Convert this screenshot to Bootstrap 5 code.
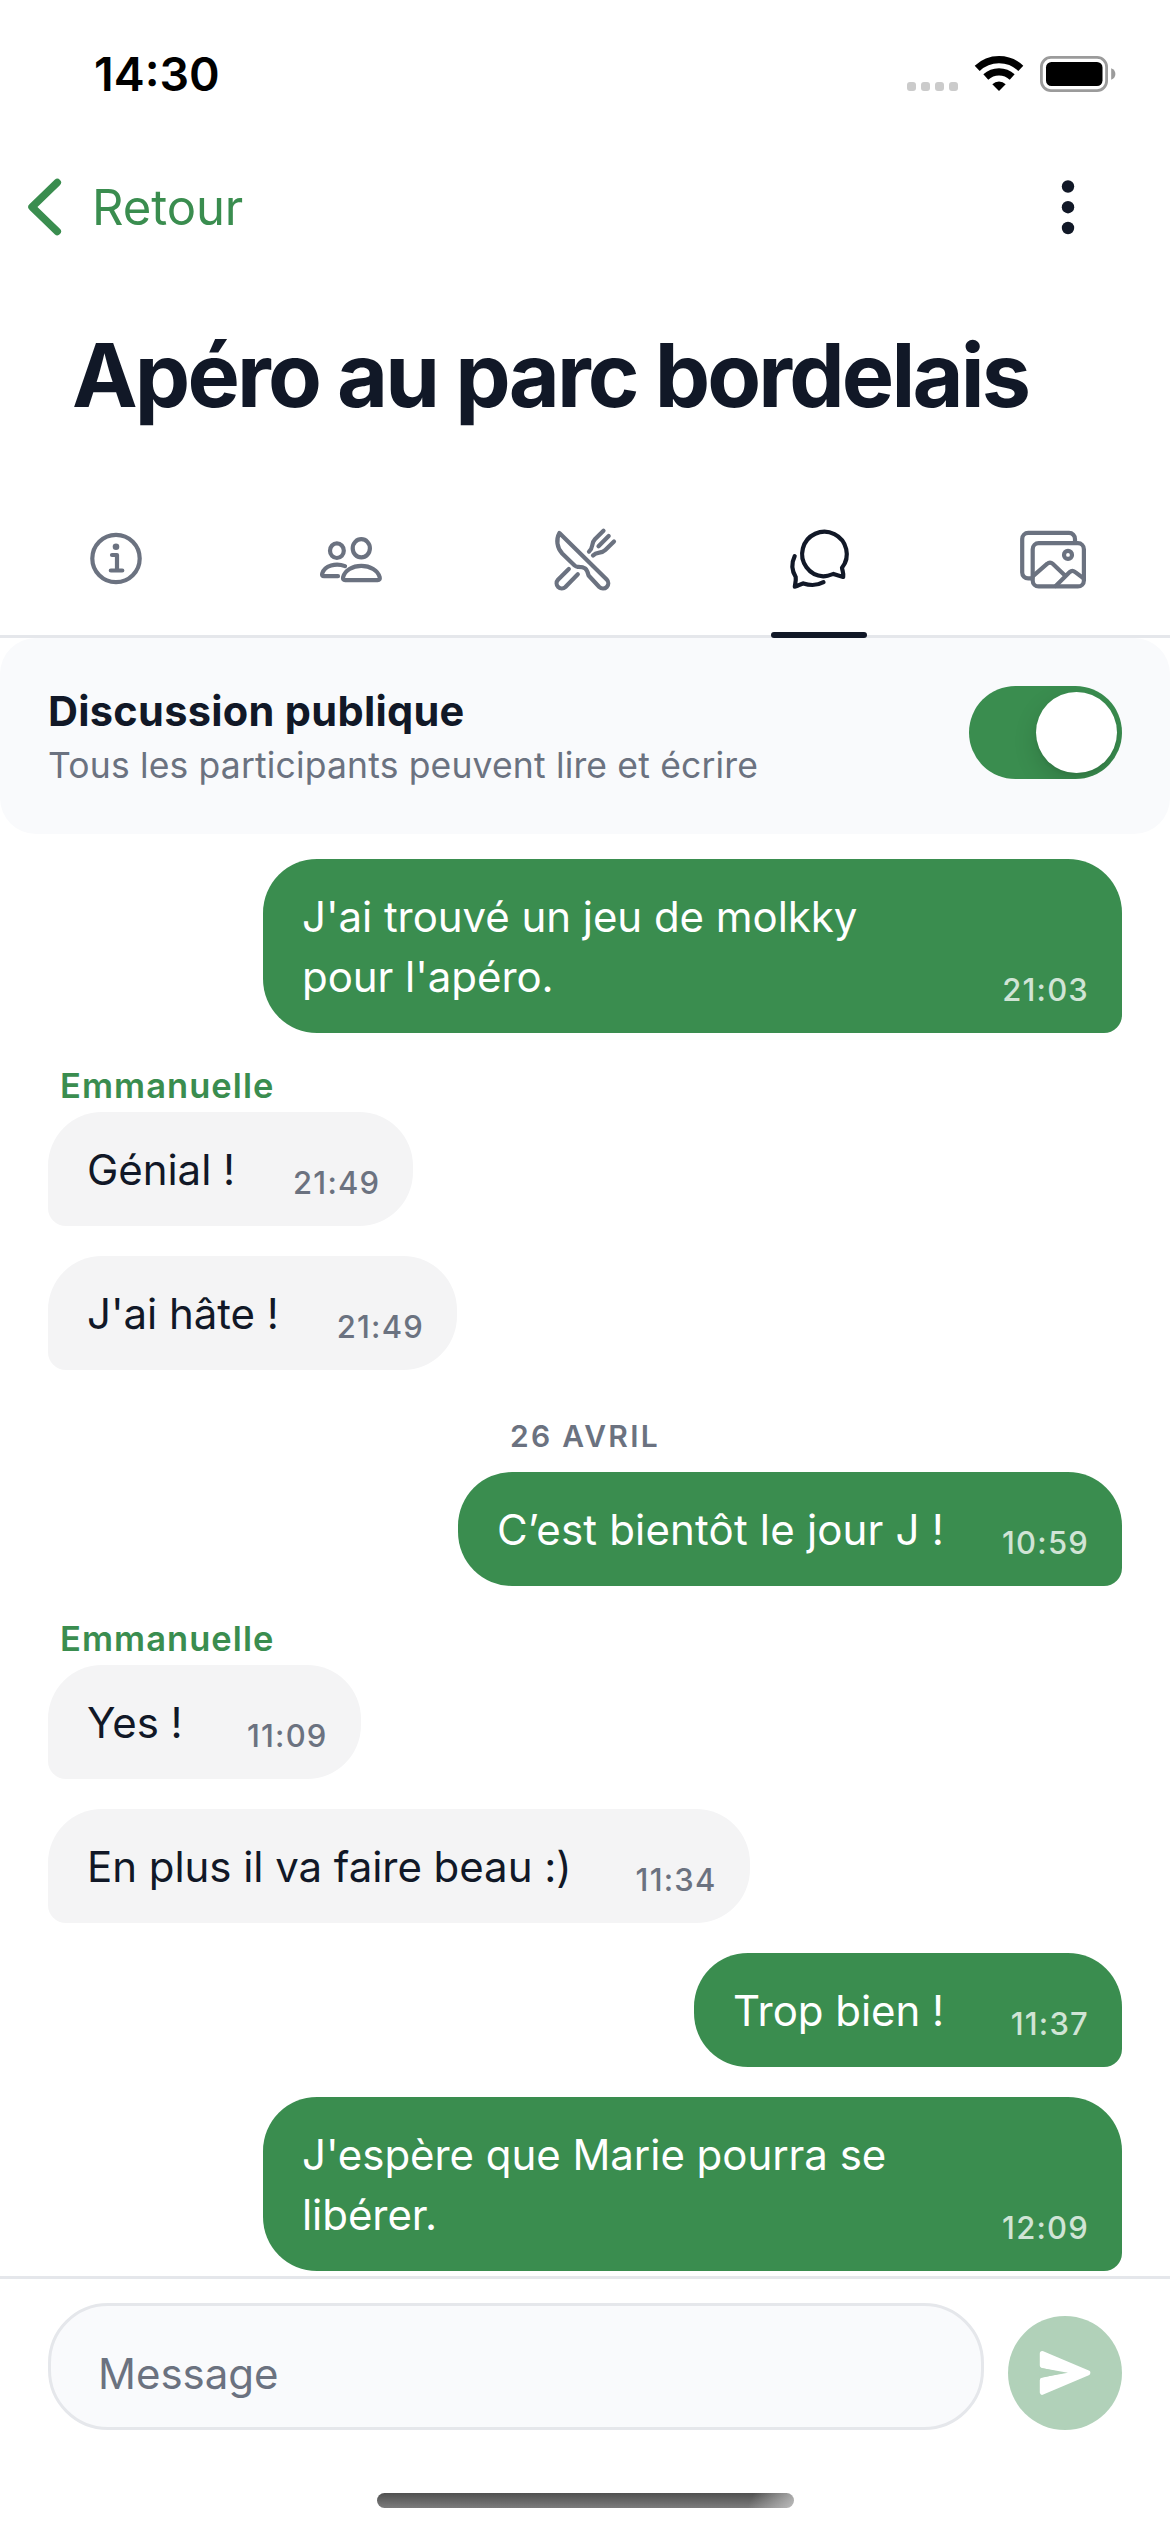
<!DOCTYPE html>
<html lang="fr">
<head>
<meta charset="utf-8">
<meta name="viewport" content="width=device-width, initial-scale=1">
<title>Apéro au parc bordelais</title>
<link href="https://cdn.jsdelivr.net/npm/bootstrap@5.3.0/dist/css/bootstrap.min.css" rel="stylesheet">
<style>
  :root { --green: #3a8d4f; --ink: #111827; --muted: #6b7280; --line: #e5e7eb; --soft: #f9fafc; }
  body { font-family: Inter, "Liberation Sans", sans-serif; color: var(--ink); background: #fff; }
  .screen { width: 1170px; height: 2532px; }
  svg { display: block; flex: none; }

  .statusbar { height: 148px; padding: 0 54px 0 94px; color: #000; }
  .clock { font-size: 46.5px; font-weight: 600; line-height: 56px; }

  .topnav { height: 118px; padding: 0 94px 0 28px; }
  .back { color: var(--green); font-size: 49px; letter-spacing: -.1px; line-height: 60px; gap: 30px; }
  .back span { padding-top: 1px; }
  .event-title { height: 218px; padding-left: 72px; font-size: 88px; font-weight: 700; letter-spacing: -2.85px; line-height: 106px; }

  .tabs { height: 154px; border-bottom: 3px solid var(--line); color: var(--muted); }
  .tabs .nav-link { height: 151px; color: inherit; }
  .tabs .nav-link.active { color: var(--ink); }
  .tabs .nav-link.active::after { content: ""; position: absolute; left: 50%; bottom: -3px; width: 96px; height: 6px; margin-left: -48px; border-radius: 3px; background: var(--ink); }

  .visibility { height: 196px; padding: 0 48px; background: var(--soft); border-radius: 36px; }
  .visibility-title { font-size: 41.5px; font-weight: 700; letter-spacing: .3px; line-height: 57px; padding-top: 2px; }
  .visibility-sub { font-size: 35.5px; letter-spacing: .16px; line-height: 51px; color: var(--muted); }
  .toggle { width: 153px; height: 93px; padding: 0 5px; margin-bottom: 7px; border-radius: 47px; background: var(--green); overflow: hidden; }
  .knob { width: 81px; height: 81px; border-radius: 50%; background: #fff; box-shadow: 0 9px 24px rgba(0,0,0,.14), 0 3px 3px rgba(0,0,0,.05); }

  .thread { height: 1442px; padding: 25px 48px 0; overflow: hidden; }
  .bubble { padding: 27.5px 33px 26.5px 39px; gap: 58px; border-radius: 54px; font-size: 42px; letter-spacing: -.05px; line-height: 60px; white-space: nowrap; margin-top: 30px; }
  .bubble.first, .sender + .bubble, .day + .bubble { margin-top: 0; }
  .day + .bubble { letter-spacing: .18px; }
  .sent { align-self: flex-end; background: var(--green); color: #fff; border-bottom-right-radius: 18px; }
  .received { align-self: flex-start; background: #f4f4f5; border-bottom-left-radius: 18px; }
  .two-lines { width: 859px; }
  .hour { min-width: 87px; text-align: right; font-size: 31px; font-weight: 500; letter-spacing: 1.2px; line-height: 40px; margin-bottom: -3.5px; color: var(--muted); }
  .sent .hour { color: #d0e4d5; }
  .sender { margin: 26px 0 0 12px; font-size: 34.5px; font-weight: 600; letter-spacing: 1.05px; line-height: 53px; color: var(--green); }
  .day { margin-top: 31px; font-size: 30px; font-weight: 600; letter-spacing: 2.3px; line-height: 71px; color: var(--muted); }

  .composer { border-top: 3px solid var(--line); padding: 24px 48px 0; gap: 24px; }
  .composer .form-control { height: 127px; padding: 14px 45px 0 47px; border: 3px solid var(--line); border-radius: 60px; background: var(--soft); font-size: 42px; line-height: 60px; }
  .composer .form-control::placeholder { color: var(--muted); opacity: 1; }
  .send { width: 114px; height: 114px; border-radius: 50%; background: #b1d1b9; }
  .home-bar { width: 417px; height: 15px; margin-top: 63px; margin-left: 377px; border-radius: 7.5px; background: linear-gradient(112deg, rgba(255,255,255,0) 89%, rgba(205,205,205,.85) 101%), linear-gradient(#505050, #7c7c7c); }
</style>
</head>
<body>
<main class="screen d-flex flex-column overflow-hidden">

  <div class="statusbar d-flex align-items-center justify-content-between">
    <span class="clock">14:30</span>
    <svg width="210" height="38" viewBox="906 55 210 38">
      <g fill="#cbcbcb"><rect x="907" y="82" width="9" height="9" rx="3"/><rect x="921" y="82" width="9" height="9" rx="3"/><rect x="935" y="82" width="9" height="9" rx="3"/><rect x="949" y="82" width="9" height="9" rx="3"/></g>
      <g fill="none" stroke="#000" stroke-width="7.2"><path d="M977.2 68.3a31.5 31.5 0 0 1 43.6 0"/><path d="M985.8 77a19.3 19.3 0 0 1 26.4 0"/></g>
      <path d="M992.3 84.2a10 10 0 0 1 13.4 0L999 91z"/>
      <rect x="1041.4" y="57.4" width="65.2" height="33.2" rx="9.5" fill="none" stroke="#9b9b9b" stroke-width="2.8"/>
      <rect x="1046" y="62" width="56.5" height="24" rx="5.5"/>
      <path d="M1111.2 68.3c2.8 1 4.2 3.2 4.2 5.7s-1.4 4.7-4.2 5.7z" fill="#9b9b9b"/>
    </svg>
  </div>

  <header class="topnav d-flex align-items-center justify-content-between">
    <a class="back d-flex align-items-center text-decoration-none" href="#">
      <svg width="34" height="58" viewBox="28 178 34 58" fill="none" stroke="currentColor" stroke-width="7.5" stroke-linecap="round" stroke-linejoin="round"><path d="M57.3 182.5L32 207l25.3 24.5"/></svg>
      <span>Retour</span>
    </a>
    <svg width="16" height="56" viewBox="1060 179 16 56" fill="#111827"><circle cx="1068" cy="186.5" r="6.2"/><circle cx="1068" cy="207.2" r="6.2"/><circle cx="1068" cy="228" r="6.2"/></svg>
  </header>

  <h1 class="event-title d-flex align-items-center m-0 text-nowrap">Apéro au parc bordelais</h1>

  <nav class="tabs nav nav-justified flex-nowrap">
    <a class="nav-link nav-item d-flex align-items-center justify-content-center p-0" href="#" aria-label="Infos">
      <svg width="80" height="80" viewBox="77 519.5 80 80" fill="none" stroke="currentColor" stroke-width="4.2" stroke-linecap="round" stroke-linejoin="round"><circle cx="116" cy="558" r="23.7"/><circle cx="116" cy="546.2" r="3.3" fill="currentColor" stroke="none"/><path d="M112 554.5h5v15.500M110.800 570h11.500"/></svg>
    </a>
    <a class="nav-link nav-item d-flex align-items-center justify-content-center p-0" href="#" aria-label="Participants">
      <svg width="80" height="80" viewBox="311 519.5 80 80" fill="none" stroke="currentColor" stroke-width="4.2" stroke-linecap="round" stroke-linejoin="round"><ellipse cx="336.9" cy="550.2" rx="6.9" ry="7.3"/><ellipse cx="361.3" cy="547.8" rx="8.6" ry="9.1"/><path d="M345 565.600c-9-3.600-20.500-.6-22.800 7.400-.5 1.700.2 2.700 1.800 2.700h14M361.300 565.300c-8.800 0-16.600 4.600-18.200 11.400-.4 1.800.3 2.900 2 2.900h32.600c1.700 0 2.400-1.100 2-2.900-1.700-6.800-9.600-11.400-18.400-11.400z"/></svg>
    </a>
    <a class="nav-link nav-item d-flex align-items-center justify-content-center p-0" href="#" aria-label="Repas">
      <svg width="80" height="80" viewBox="545 519.5 80 80" fill="none" stroke="currentColor" stroke-width="4.2" stroke-linecap="round" stroke-linejoin="round"><path d="M559.400 532.500L606.700 579a5.200 5.200 0 0 1-7.400 7.500L588.600 575c-1.600-6.800-4-9-11.100-8.700-1.200 0-2-.5-2.900-1.300l-12.400-12c-5.300-5.800-6.400-14-2.800-20.500z"/><path d="M568.800 568.500L558 579.200a5.200 5.200 0 0 0 7.400 7.300l12.400-12.700M603.500 530.200l-8.600 8.600c-4.200 4.200-1 8.300-5.900 12.300M608.700 535.400l-10.200 10.300M614 540.900l-8.700 8.700c-4 4-8.300 1-12.300 5.400"/></svg>
    </a>
    <a class="nav-link nav-item active position-relative d-flex align-items-center justify-content-center p-0" href="#" aria-label="Discussion">
      <svg width="80" height="80" viewBox="779 519.5 80 80" fill="none" stroke="currentColor" stroke-width="4.2" stroke-linecap="round" stroke-linejoin="round"><path d="M842 567.300A22.300 22.300 0 1 0 823.300 575.800c3.700 0 7-1.200 10.200-2.400l9.700 3c.6-3.300-.8-6-1.200-9.100z"/><path d="M794.700 555.600c-3.400 7-2.900 14.400 1 20.900.5 3-.5 6.600-.9 9.700 3.700-.6 5.300-2.600 8.600-3.300 7 2.400 13.900 2.100 20.100-1.200"/></svg>
    </a>
    <a class="nav-link nav-item d-flex align-items-center justify-content-center p-0" href="#" aria-label="Photos">
      <svg width="80" height="80" viewBox="1013 519.5 80 80" fill="none" stroke="currentColor" stroke-width="4.2" stroke-linecap="round" stroke-linejoin="round"><rect x="1032.7" y="542.7" width="51.2" height="43.2" rx="6"/><path d="M1075 541v-2.400a6 6 0 0 0-6-6.200h-40.800a6 6 0 0 0-6 6v33.500a6 6 0 0 0 6 6h4M1033 575.600l14.300-12.400a4 4 0 0 1 5.400 0l11.500 11M1055.700 585.500l14-13.900a4 4 0 0 1 5.200-.2l8.600 6.300"/><circle cx="1068" cy="554.4" r="4"/></svg>
    </a>
  </nav>

  <section class="visibility d-flex align-items-center justify-content-between">
    <div>
      <div class="visibility-title">Discussion publique</div>
      <div class="visibility-sub">Tous les participants peuvent lire et écrire</div>
    </div>
    <div class="toggle d-flex align-items-center justify-content-end" role="switch" aria-checked="true"><div class="knob"></div></div>
  </section>

  <section class="thread d-flex flex-column">
    <div class="bubble sent first two-lines d-flex align-items-end justify-content-between"><span>J'ai trouvé un jeu de molkky<br>pour l'apéro.</span><span class="hour">21:03</span></div>
    <div class="sender">Emmanuelle</div>
    <div class="bubble received d-flex align-items-end"><span>Génial !</span><span class="hour">21:49</span></div>
    <div class="bubble received d-flex align-items-end"><span>J'ai hâte !</span><span class="hour">21:49</span></div>
    <div class="day text-center">26 AVRIL</div>
    <div class="bubble sent d-flex align-items-end"><span>C’est bientôt le jour J !</span><span class="hour">10:59</span></div>
    <div class="sender">Emmanuelle</div>
    <div class="bubble received d-flex align-items-end"><span>Yes !</span><span class="hour">11:09</span></div>
    <div class="bubble received d-flex align-items-end"><span>En plus il va faire beau :)</span><span class="hour">11:34</span></div>
    <div class="bubble sent d-flex align-items-end"><span>Trop bien !</span><span class="hour">11:37</span></div>
    <div class="bubble sent two-lines d-flex align-items-end justify-content-between"><span>J'espère que Marie pourra se<br>libérer.</span><span class="hour">12:09</span></div>
  </section>

  <footer>
    <div class="composer d-flex align-items-end">
      <input class="form-control" type="text" placeholder="Message" aria-label="Message">
      <button class="send btn border-0 p-0 d-flex flex-shrink-0 align-items-center justify-content-center" type="button" aria-label="Envoyer">
        <svg width="114" height="114" viewBox="0 0 114 114" fill="#fff" stroke="#fff" stroke-width="5" stroke-linejoin="round"><path d="M34.300 37.500L79.800 56.900 34.300 76.300V64.300L57 59.200q4-2.300 0-4.600L34.300 49.500z"/><path d="M31.800 51.700L60 56.700 31.800 61.700z" fill="#b1d1b9" stroke="none"/></svg>
      </button>
    </div>
    <div class="home-bar"></div>
  </footer>
</main>
<script src="https://cdn.jsdelivr.net/npm/bootstrap@5.3.0/dist/js/bootstrap.bundle.min.js"></script>
</body>
</html>
